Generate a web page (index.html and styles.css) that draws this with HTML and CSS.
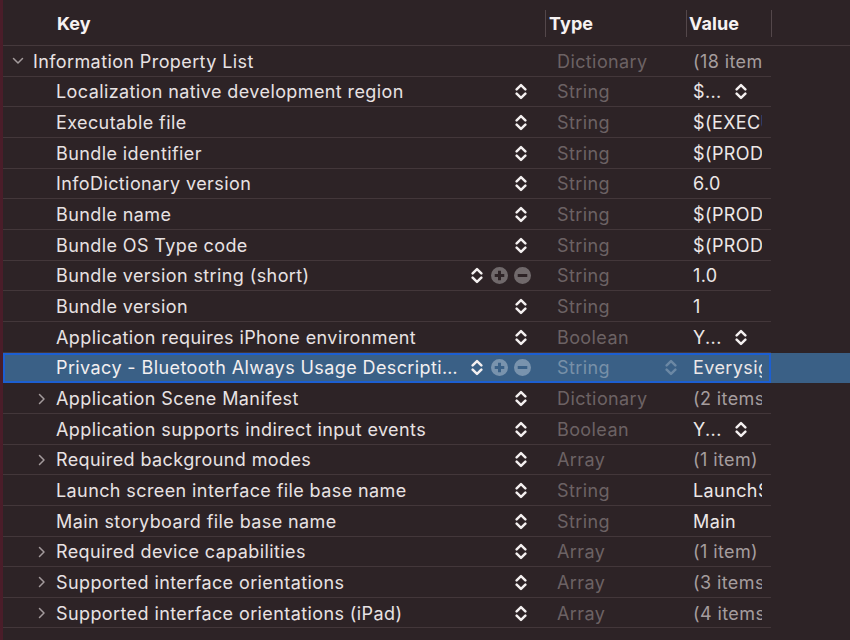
FILE: index.html
```html
<!DOCTYPE html>
<html>
<head>
<meta charset="utf-8">
<link rel="stylesheet" href="styles.css">
</head>
<body>
<svg width="0" height="0" class="defs">
  <defs>
    <symbol id="stepper" viewBox="0 0 11 16">
      <polyline points="1.4,6 5.5,1.9 9.6,6" fill="none" stroke="currentColor" stroke-width="2.3" stroke-linecap="round" stroke-linejoin="round"/>
      <polyline points="1.4,10 5.5,14.1 9.6,10" fill="none" stroke="currentColor" stroke-width="2.3" stroke-linecap="round" stroke-linejoin="round"/>
    </symbol>
    <symbol id="plus" viewBox="0 0 16 16">
      <path fill-rule="evenodd" fill="currentColor" d="M8,0 A8,8 0 1,1 8,16 A8,8 0 1,1 8,0 Z M6.6,3.5 H9.4 V6.6 H12.5 V9.4 H9.4 V12.5 H6.6 V9.4 H3.5 V6.6 H6.6 Z"/>
    </symbol>
    <symbol id="minus" viewBox="0 0 16 16">
      <path fill-rule="evenodd" fill="currentColor" d="M8,0 A8,8 0 1,1 8,16 A8,8 0 1,1 8,0 Z M3.5,6.6 H12.5 V9.4 H3.5 Z"/>
    </symbol>
    <symbol id="right" viewBox="0 0 8 12">
      <polyline points="1.5,1.5 6,6 1.5,10.5" fill="none" stroke="currentColor" stroke-width="1.5" stroke-linecap="round" stroke-linejoin="round"/>
    </symbol>
    <symbol id="down" viewBox="0 0 12 8">
      <polyline points="1.5,1.5 6,6 10.5,1.5" fill="none" stroke="currentColor" stroke-width="1.5" stroke-linecap="round" stroke-linejoin="round"/>
    </symbol>
  </defs>
</svg>
<div class="editor">
  <div class="head">
    <div class="hcell hkey">Key</div>
    <div class="hcell htype">Type</div>
    <div class="hcell hvalue">Value</div>
    <div class="hcell hend"></div>
  </div>

  <div class="row">
    <div class="cells">
      <div class="key lvl0"><svg class="disc down"><use href="#down"/></svg><span class="ktext">Information Property List</span></div>
      <div class="type">Dictionary</div>
      <div class="value"><span class="vtext count">(18 items)</span></div>
    </div>
    <div class="fill"></div>
  </div>

  <div class="row">
    <div class="cells">
      <div class="key"><span class="ktext">Localization native development region</span><span class="ctl"><svg class="step"><use href="#stepper"/></svg></span></div>
      <div class="type">String</div>
      <div class="value"><span class="vtext">$...</span><svg class="step vstep"><use href="#stepper"/></svg></div>
    </div>
    <div class="fill"></div>
  </div>

  <div class="row">
    <div class="cells">
      <div class="key"><span class="ktext">Executable file</span><span class="ctl"><svg class="step"><use href="#stepper"/></svg></span></div>
      <div class="type">String</div>
      <div class="value"><span class="vtext">$(EXECUTABLE_NAME)</span></div>
    </div>
    <div class="fill"></div>
  </div>

  <div class="row">
    <div class="cells">
      <div class="key"><span class="ktext">Bundle identifier</span><span class="ctl"><svg class="step"><use href="#stepper"/></svg></span></div>
      <div class="type">String</div>
      <div class="value"><span class="vtext">$(PRODUCT_BUNDLE_IDENTIFIER)</span></div>
    </div>
    <div class="fill"></div>
  </div>

  <div class="row">
    <div class="cells">
      <div class="key"><span class="ktext">InfoDictionary version</span><span class="ctl"><svg class="step"><use href="#stepper"/></svg></span></div>
      <div class="type">String</div>
      <div class="value"><span class="vtext">6.0</span></div>
    </div>
    <div class="fill"></div>
  </div>

  <div class="row">
    <div class="cells">
      <div class="key"><span class="ktext">Bundle name</span><span class="ctl"><svg class="step"><use href="#stepper"/></svg></span></div>
      <div class="type">String</div>
      <div class="value"><span class="vtext">$(PRODUCT_NAME)</span></div>
    </div>
    <div class="fill"></div>
  </div>

  <div class="row">
    <div class="cells">
      <div class="key"><span class="ktext">Bundle OS Type code</span><span class="ctl"><svg class="step"><use href="#stepper"/></svg></span></div>
      <div class="type">String</div>
      <div class="value"><span class="vtext">$(PRODUCT_BUNDLE_PACKAGE_TYPE)</span></div>
    </div>
    <div class="fill"></div>
  </div>

  <div class="row">
    <div class="cells">
      <div class="key"><span class="ktext">Bundle version string (short)</span><span class="ctl ctl3"><svg class="step"><use href="#stepper"/></svg><svg class="circ"><use href="#plus"/></svg><svg class="circ"><use href="#minus"/></svg></span></div>
      <div class="type">String</div>
      <div class="value"><span class="vtext">1.0</span></div>
    </div>
    <div class="fill"></div>
  </div>

  <div class="row">
    <div class="cells">
      <div class="key"><span class="ktext">Bundle version</span><span class="ctl"><svg class="step"><use href="#stepper"/></svg></span></div>
      <div class="type">String</div>
      <div class="value"><span class="vtext">1</span></div>
    </div>
    <div class="fill"></div>
  </div>

  <div class="row">
    <div class="cells">
      <div class="key"><span class="ktext">Application requires iPhone environment</span><span class="ctl"><svg class="step"><use href="#stepper"/></svg></span></div>
      <div class="type">Boolean</div>
      <div class="value"><span class="vtext">Y...</span><svg class="step vstep"><use href="#stepper"/></svg></div>
    </div>
    <div class="fill"></div>
  </div>

  <div class="row sel">
    <div class="cells">
      <div class="key"><span class="ktext">Privacy - Bluetooth Always Usage Descripti…</span><span class="ctl ctl3"><svg class="step"><use href="#stepper"/></svg><svg class="circ"><use href="#plus"/></svg><svg class="circ"><use href="#minus"/></svg></span></div>
      <div class="type"><span class="ttext">String</span><svg class="step tstep"><use href="#stepper"/></svg></div>
      <div class="value"><span class="vtext">Everysight</span></div>
    </div>
    <div class="fill"></div>
  </div>

  <div class="row">
    <div class="cells">
      <div class="key"><svg class="disc"><use href="#right"/></svg><span class="ktext">Application Scene Manifest</span><span class="ctl"><svg class="step"><use href="#stepper"/></svg></span></div>
      <div class="type">Dictionary</div>
      <div class="value"><span class="vtext count">(2 items)</span></div>
    </div>
    <div class="fill"></div>
  </div>

  <div class="row">
    <div class="cells">
      <div class="key"><span class="ktext">Application supports indirect input events</span><span class="ctl"><svg class="step"><use href="#stepper"/></svg></span></div>
      <div class="type">Boolean</div>
      <div class="value"><span class="vtext">Y...</span><svg class="step vstep"><use href="#stepper"/></svg></div>
    </div>
    <div class="fill"></div>
  </div>

  <div class="row">
    <div class="cells">
      <div class="key"><svg class="disc"><use href="#right"/></svg><span class="ktext">Required background modes</span><span class="ctl"><svg class="step"><use href="#stepper"/></svg></span></div>
      <div class="type">Array</div>
      <div class="value"><span class="vtext count">(1 item)</span></div>
    </div>
    <div class="fill"></div>
  </div>

  <div class="row">
    <div class="cells">
      <div class="key"><span class="ktext">Launch screen interface file base name</span><span class="ctl"><svg class="step"><use href="#stepper"/></svg></span></div>
      <div class="type">String</div>
      <div class="value"><span class="vtext">LaunchScreen</span></div>
    </div>
    <div class="fill"></div>
  </div>

  <div class="row">
    <div class="cells">
      <div class="key"><span class="ktext">Main storyboard file base name</span><span class="ctl"><svg class="step"><use href="#stepper"/></svg></span></div>
      <div class="type">String</div>
      <div class="value"><span class="vtext">Main</span></div>
    </div>
    <div class="fill"></div>
  </div>

  <div class="row">
    <div class="cells">
      <div class="key"><svg class="disc"><use href="#right"/></svg><span class="ktext">Required device capabilities</span><span class="ctl"><svg class="step"><use href="#stepper"/></svg></span></div>
      <div class="type">Array</div>
      <div class="value"><span class="vtext count">(1 item)</span></div>
    </div>
    <div class="fill"></div>
  </div>

  <div class="row">
    <div class="cells">
      <div class="key"><svg class="disc"><use href="#right"/></svg><span class="ktext">Supported interface orientations</span><span class="ctl"><svg class="step"><use href="#stepper"/></svg></span></div>
      <div class="type">Array</div>
      <div class="value"><span class="vtext count">(3 items)</span></div>
    </div>
    <div class="fill"></div>
  </div>

  <div class="row">
    <div class="cells">
      <div class="key"><svg class="disc"><use href="#right"/></svg><span class="ktext">Supported interface orientations (iPad)</span><span class="ctl"><svg class="step"><use href="#stepper"/></svg></span></div>
      <div class="type">Array</div>
      <div class="value"><span class="vtext count">(4 items)</span></div>
    </div>
    <div class="fill"></div>
  </div>
</div>
</body>
</html>
```
FILE: styles.css
```css
html, body {
  margin: 0;
  padding: 0;
  height: 100%;
  background: #2d2326;
  overflow: hidden;
}
.defs {
  position: absolute;
  width: 0;
  height: 0;
}
.editor {
  height: 640px;
  box-sizing: border-box;
  border-left: 3px solid #4a1d29;
  background: #2d2326;
  font-family: Inter, "Noto Sans", sans-serif;
  font-size: 18px;
  letter-spacing: 0.4px;
  color: #e8e2e3;
}
.head {
  display: flex;
  align-items: center;
  height: 46px;
  padding-top: 1px;
  box-sizing: border-box;
  border-bottom: 1px solid #45393c;
}
.hcell {
  height: 27px;
  display: flex;
  align-items: center;
  box-sizing: border-box;
  font-weight: 700;
  letter-spacing: 0.1px;
  color: #f6f2f2;
}
.hkey {
  width: 542px;
  padding-left: 54px;
}
.htype {
  width: 141px;
  padding-left: 3px;
  border-left: 1px solid #53474a;
}
.hvalue {
  width: 85px;
  padding-left: 2px;
  border-left: 1px solid #53474a;
}
.hend {
  width: 10px;
  border-left: 1px solid #53474a;
}
.row {
  display: flex;
  height: 30.67px;
}
.cells {
  width: 768px;
  flex: none;
  display: grid;
  grid-template-columns: 542px 141px 85px;
  box-sizing: border-box;
  padding-top: 1px;
  border-bottom: 1px solid #43373a;
}
.fill {
  flex: 1;
}
.key, .type, .value {
  display: flex;
  align-items: center;
  min-width: 0;
  white-space: nowrap;
}
.key {
  padding-left: 53px;
}
.key.lvl0 {
  padding-left: 9px;
}
.ktext {
  flex: 1;
  min-width: 0;
  overflow: hidden;
}
.disc {
  width: 8px;
  height: 12px;
  margin-left: -18px;
  margin-right: 10px;
  color: #a39b9c;
  flex: none;
}
.disc.down {
  width: 12px;
  height: 8px;
  margin-left: 0;
  margin-right: 9px;
}
.ctl {
  display: flex;
  align-items: center;
  flex: none;
  margin-left: 6px;
  margin-right: 18px;
}
.ctl3 {
  margin-right: 14px;
}
.step {
  width: 12px;
  height: 17px;
  color: #f4f0f0;
  flex: none;
}
.circ {
  width: 17px;
  height: 17px;
  color: rgba(255, 255, 255, 0.32);
  flex: none;
}
.ctl3 .circ:nth-child(2) {
  margin-left: 8px;
}
.ctl3 .circ:nth-child(3) {
  margin-left: 6px;
}
.type {
  padding-left: 12px;
  color: #6c6264;
}
.ttext {
  flex: 1;
}
.tstep {
  color: rgba(255, 255, 255, 0.25);
  margin-right: 9px;
}
.value {
  padding-left: 7px;
  padding-right: 9px;
  color: #ece7e7;
}
.vtext {
  flex: 1;
  min-width: 0;
  overflow: hidden;
}
.vtext.count {
  color: #a59d9e;
}
.vstep {
  margin-right: 15px;
}
.row.sel {
  background: #3a6086;
}
.row.sel .cells {
  border-bottom-color: transparent;
  outline: 2px solid #1c5fd2;
  outline-offset: -2px;
}
.row.sel .type {
  color: #7890a8;
}
.row.sel .key {
  color: #f2eff0;
}
```
